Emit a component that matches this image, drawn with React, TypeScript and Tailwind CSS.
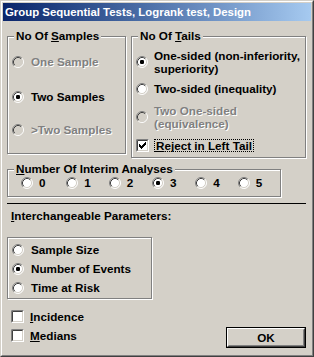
import React from "react";

function RadioIcon({ checked, disabled }: { checked?: boolean; disabled?: boolean }) {
  return (
    <svg width="12" height="12" viewBox="0 0 12 12" className="shrink-0 block">
      <circle cx="6" cy="6" r="5" fill={disabled ? "#d4d0c8" : "#fff"} />
      <path d="M2.11 9.89 A5.5 5.5 0 0 1 9.89 2.11" stroke="#808080" fill="none" />
      <path d="M9.89 2.11 A5.5 5.5 0 0 1 2.11 9.89" stroke="#fff" fill="none" />
      <path d="M2.82 9.18 A4.5 4.5 0 0 1 9.18 2.82" stroke="#404040" fill="none" />
      <path d="M9.18 2.82 A4.5 4.5 0 0 1 2.82 9.18" stroke="#d4d0c8" fill="none" />
      {checked && <rect x="4" y="4" width="4" height="4" rx="1.2" fill="#000" />}
    </svg>
  );
}

function CheckIcon({ checked }: { checked?: boolean }) {
  const cols = [
    [3, 5],
    [4, 6],
    [5, 7],
    [6, 6],
    [7, 5],
    [8, 4],
    [9, 3],
  ];
  return (
    <svg width="13" height="13" viewBox="0 0 13 13" className="shrink-0 block">
      <rect x="0" y="0" width="13" height="13" fill="#fff" />
      <rect x="1" y="1" width="11" height="11" fill="#d4d0c8" />
      <path d="M0.5 12.5 V0.5 H12.5" stroke="#808080" fill="none" />
      <path d="M1.5 11.5 V1.5 H11.5" stroke="#404040" fill="none" />
      <rect x="2" y="2" width="9" height="9" fill="#fff" />
      {checked &&
        cols.map(([x, y]) => <rect key={x} x={x} y={y} width="1" height="3" fill="#000" />)}
    </svg>
  );
}

function Label({ children, disabled }: { children: React.ReactNode; disabled?: boolean }) {
  return (
    <span
      className={
        "leading-[13px] whitespace-nowrap " +
        (disabled ? "text-[#808080] [text-shadow:1px_1px_0_#fff]" : "text-black")
      }
    >
      {children}
    </span>
  );
}

function Group({
  label,
  className,
  children,
}: {
  label?: React.ReactNode;
  className: string;
  children: React.ReactNode;
}) {
  return (
    <div
      className={
        "relative border border-[#808080] shadow-[inset_1px_1px_0_#fff,1px_1px_0_#fff] " + className
      }
    >
      {label && (
        <span className="absolute left-[6px] top-[-8px] bg-[#d4d0c8] px-[2px] leading-[13px] whitespace-nowrap">
          {label}
        </span>
      )}
      {children}
    </div>
  );
}

export default function App() {
  return (
    <div className="w-[314px] h-[357px] bg-[#d4d0c8] font-['Liberation_Sans',Arial,sans-serif] font-bold text-[11.7px] text-black">
      <div className="w-full h-full border border-t-[#d4d0c8] border-l-[#d4d0c8] border-r-[#404040] border-b-[#404040]">
        <div className="w-full h-full border border-t-white border-l-white border-r-[#808080] border-b-[#808080] p-px flex flex-col">
          {/* Title bar */}
          <div className="h-[18px] shrink-0 bg-linear-to-r from-[#0a246a] to-[#a6caf0] text-white text-[11.4px] pl-[2px] leading-[18px] whitespace-nowrap">
            Group Sequential Tests, Logrank test, Design
          </div>

          {/* Content */}
          <div className="flex flex-col pl-[4px]">
            <div className="flex items-start mt-[15px]">
              <Group
                className="w-[119px] h-[118px]"
                label={
                  <>
                    No Of <u>S</u>amples
                  </>
                }
              >
                <div className="flex flex-col pl-[4px] pt-[18px]">
                  <div className="flex items-center gap-[7px]">
                    <RadioIcon disabled />
                    <Label disabled>One Sample</Label>
                  </div>
                  <div className="flex items-center gap-[7px] mt-[22px]">
                    <RadioIcon checked />
                    <Label>Two Samples</Label>
                  </div>
                  <div className="flex items-center gap-[7px] mt-[20px]">
                    <RadioIcon disabled />
                    <Label disabled>&gt;Two Samples</Label>
                  </div>
                </div>
              </Group>

              <Group
                className="w-[175px] h-[122px] ml-[5px]"
                label={
                  <>
                    No Of <u>T</u>ails
                  </>
                }
              >
                <div className="flex flex-col pl-[4px] pt-[12px]">
                  <div className="flex items-center gap-[6px]">
                    <RadioIcon checked />
                    <div className="flex flex-col">
                      <Label>One-sided (non-inferiority,</Label>
                      <Label>superiority)</Label>
                    </div>
                  </div>
                  <div className="flex items-center gap-[6px] mt-[7px]">
                    <RadioIcon />
                    <Label>Two-sided (inequality)</Label>
                  </div>
                  <div className="flex items-center gap-[6px] mt-[9px]">
                    <RadioIcon disabled />
                    <div className="flex flex-col">
                      <Label disabled>Two One-sided</Label>
                      <Label disabled>(equivalence)</Label>
                    </div>
                  </div>
                  <div className="flex items-center gap-[5px] mt-[9px]">
                    <CheckIcon checked />
                    <span className="border border-dotted border-black px-px leading-[11px] whitespace-nowrap">
                      <u>R</u>eject in Left Tail
                    </span>
                  </div>
                </div>
              </Group>
            </div>

            <Group
              className="w-[274px] h-[28px] mt-[11px]"
              label={
                <>
                  <u>N</u>umber Of Interim Analyses
                </>
              }
            >
              <div className="flex items-center pl-[13px] pt-[6px]">
                {["0", "1", "2", "3", "4", "5"].map((n, i) => (
                  <div
                    key={n}
                    className={
                      "flex items-center gap-[6px] " +
                      (i === 0 ? "w-[46px]" : i === 2 || i === 3 ? "w-[44px]" : "w-[43px]")
                    }
                  >
                    <RadioIcon checked={n === "3"} />
                    <Label>{n}</Label>
                  </div>
                ))}
              </div>
            </Group>

            <div className="w-[299px] h-px bg-black mt-[6px]" />

            <div className="mt-[5px] pl-[4px] leading-[13px]">
              <u>I</u>nterchangeable Parameters:
            </div>

            <Group className="w-[145px] h-[62px] mt-[15px]">
              <div className="flex flex-col pl-[4px] pt-[5px] gap-[6px]">
                <div className="flex items-center gap-[7px]">
                  <RadioIcon />
                  <Label>Sample Size</Label>
                </div>
                <div className="flex items-center gap-[7px]">
                  <RadioIcon checked />
                  <Label>Number of Events</Label>
                </div>
                <div className="flex items-center gap-[7px]">
                  <RadioIcon />
                  <Label>Time at Risk</Label>
                </div>
              </div>
            </Group>

            <div className="flex items-start justify-between mt-[11px] pr-[5px]">
              <div className="flex flex-col pl-[4px] gap-[6px]">
                <div className="flex items-center gap-[6px]">
                  <CheckIcon />
                  <Label>
                    <u>I</u>ncidence
                  </Label>
                </div>
                <div className="flex items-center gap-[6px]">
                  <CheckIcon />
                  <Label>
                    <u>M</u>edians
                  </Label>
                </div>
              </div>

              <div className="mt-[17px] w-[80px] h-[21px] border border-black">
                <div className="w-full h-full border border-t-white border-l-white border-r-[#404040] border-b-[#404040]">
                  <div className="w-full h-full border border-t-[#d4d0c8] border-l-[#d4d0c8] border-r-[#808080] border-b-[#808080] flex items-center justify-center leading-[13px]">
                    OK
                  </div>
                </div>
              </div>
            </div>
          </div>
        </div>
      </div>
    </div>
  );
}
